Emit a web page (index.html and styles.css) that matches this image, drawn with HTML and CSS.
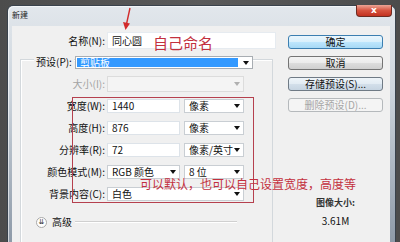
FILE: index.html
```html
<!DOCTYPE html>
<html lang="zh-CN">
<head>
  <meta charset="UTF-8" />
  <meta name="viewport" content="width=device-width, initial-scale=1.0" />
  <title>新建</title>
  <link rel="stylesheet" href="styles.css">
</head>
<body>
  <div class="desktop">
    <div class="window">
      <div class="titlebar">
        <span class="title">新建</span>
        <div class="close-btn">x</div>
      </div>
      <div class="client">
        <div class="main">
          <div class="row name-row">
            <span class="lbl">名称(N):</span>
            <div class="field name-field">同心圆</div>
          </div>

          <div class="group">
            <div class="preset-row">
              <span class="legend">预设(P):</span>
              <div class="combo preset-combo">
                <span class="selected">剪贴板</span>
                <span class="arrow"></span>
              </div>
            </div>
            <div class="row">
              <span class="lbl disabled">大小(I):</span>
              <div class="combo size-combo disabled"><span class="arrow"></span></div>
            </div>
            <div class="row">
              <span class="lbl">宽度(W):</span>
              <div class="field num-field">1440</div>
              <div class="combo unit-combo">像素<span class="arrow"></span></div>
            </div>
            <div class="row">
              <span class="lbl">高度(H):</span>
              <div class="field num-field">876</div>
              <div class="combo unit-combo">像素<span class="arrow"></span></div>
            </div>
            <div class="row">
              <span class="lbl">分辨率(R):</span>
              <div class="field num-field">72</div>
              <div class="combo unit-combo">像素/英寸<span class="arrow"></span></div>
            </div>
            <div class="row">
              <span class="lbl">颜色模式(M):</span>
              <div class="combo num-field">RGB 颜色<span class="arrow"></span></div>
              <div class="combo unit-combo">8 位<span class="arrow"></span></div>
            </div>
            <div class="row">
              <span class="lbl">背景内容(C):</span>
              <div class="combo wide-combo">白色<span class="arrow"></span></div>
            </div>
            <div class="advanced">
              <span class="expand">&#8650;</span>
              <span class="adv-label">高级</span>
              <span class="adv-line"></span>
            </div>
          </div>
        </div>

        <div class="side">
          <div class="btn default">确定</div>
          <div class="btn">取消</div>
          <div class="btn soft">存储预设(S)...</div>
          <div class="btn off">删除预设(D)...</div>
          <div class="info-title">图像大小:</div>
          <div class="info-value">3.61M</div>
        </div>
      </div>
    </div>

    <!-- red annotations drawn over the dialog -->
    <svg class="note-arrow" width="14" height="24" viewBox="0 0 14 24">
      <line x1="10" y1="1" x2="6.5" y2="17" stroke="#d22a2a" stroke-width="1.4" />
      <polygon points="3,15 10,16.5 5.5,23" fill="#d22a2a" />
    </svg>
    <div class="note note-name">自己命名</div>
    <div class="note-box"></div>
    <div class="note note-size">可以默认，也可以自己设置宽度，高度等</div>
  </div>
</body>
</html>
```

FILE: styles.css
```css
* {
  box-sizing: border-box;
}
body {
  margin: 0;
  width: 400px;
  height: 242px;
  overflow: hidden;
  background: #545454;
  font-family: "Noto Sans CJK SC", "Liberation Sans", sans-serif;
  font-size: 10px;
  color: #111;
}
.desktop {
  position: relative;
  width: 400px;
  height: 242px;
  overflow: hidden;
  padding: 5px 0 0 7px;
  background: linear-gradient(90deg, #4c4c4c, #5a5a5a 50%, #4c4c4c);
}
.window {
  display: flex;
  flex-direction: column;
  width: 389px;
  height: 237px;
  padding: 0 5px 0 4px;
  border: 1px solid #39424c;
  border-bottom: none;
  border-radius: 6px 6px 0 0;
  background: linear-gradient(#e2e7ec, #cdd5dd 35%, #8e9aa8);
  box-shadow: inset 1px 1px 0 rgba(255, 255, 255, 0.6);
}
.titlebar {
  height: 20px;
  display: flex;
  justify-content: space-between;
  align-items: flex-start;
}
.title {
  margin-top: 4px;
  font-size: 8px;
  line-height: 10px;
  color: #1c1c1c;
}
.close-btn {
  width: 36px;
  height: 12px;
  margin: -1px -2px 0 0;
  border: 1px solid #6d2b22;
  border-top: none;
  border-radius: 0 0 4px 4px;
  background: linear-gradient(#eaa596, #d6533f 50%, #c2311f);
  color: #fff;
  font-family: "DejaVu Sans", sans-serif;
  font-weight: bold;
  font-size: 9px;
  line-height: 10px;
  text-align: center;
}
.client {
  display: flex;
  flex: 1;
  background: #f0f0f0;
}
.main {
  width: 268px;
  padding-top: 4px;
}
.row {
  display: flex;
  align-items: center;
  height: 22px;
}
.name-row {
  height: 21px;
}
.lbl {
  width: 84px;
  margin-right: 2px;
  text-align: right;
  white-space: nowrap;
  line-height: 12px;
}
.name-row .lbl {
  width: 93px;
}
.disabled {
  color: #a3a3a3;
}
.field,
.combo {
  position: relative;
  height: 14px;
  padding-left: 4px;
  background: #fff;
  border: 1px solid #dde3e9;
  line-height: 12px;
  white-space: nowrap;
}
.combo {
  border-color: #c9ced3;
}
.name-field {
  width: 169px;
  height: 17px;
  line-height: 15px;
  border-color: #e6ebf0;
}
.num-field {
  width: 73px;
}
.unit-combo {
  width: 60px;
  margin-left: 4px;
}
.wide-combo {
  width: 137px;
}
.arrow {
  position: absolute;
  right: 3px;
  top: 4px;
  width: 0;
  height: 0;
  border-left: 3px solid transparent;
  border-right: 3px solid transparent;
  border-top: 4px solid #111;
}
.group {
  width: 253px;
  height: 183px;
  margin: 8px 0 0 8px;
  border: 1px solid #d3d8dc;
  border-bottom: none;
  box-shadow: inset 1px 1px 0 #fff;
}
.preset-row {
  display: flex;
  align-items: center;
  height: 22px;
  margin-top: -9px;
}
.legend {
  width: 40px;
  margin-left: 13px;
  padding-left: 2px;
  background: #f0f0f0;
  line-height: 12px;
  white-space: nowrap;
}
.preset-combo {
  width: 178px;
  height: 13px;
  margin-left: 1px;
  padding: 1px;
  border-color: #a8adb2;
}
.selected {
  display: block;
  width: 161px;
  height: 9px;
  padding-left: 3px;
  background: #3399ff;
  color: #fff;
  line-height: 9px;
}
.preset-combo .arrow {
  top: 4px;
  right: 3px;
}
.size-combo {
  width: 137px;
  height: 16px;
  background: #f4f4f4;
  border-color: #dcdcdc;
}
.size-combo .arrow {
  top: 5px;
  border-top-color: #b0b0b0;
}
.advanced {
  display: flex;
  align-items: center;
  height: 22px;
  margin-top: 6px;
}
.expand {
  width: 11px;
  height: 11px;
  margin-left: 15px;
  border: 1px solid #a9a9a9;
  border-radius: 50%;
  background: #fff;
  font-family: "DejaVu Sans", sans-serif;
  font-size: 7px;
  line-height: 9px;
  text-align: center;
  color: #333;
}
.adv-label {
  margin-left: 5px;
  line-height: 12px;
}
.adv-line {
  width: 162px;
  height: 2px;
  margin-left: 3px;
  border-top: 1px solid #d0d0d0;
  border-bottom: 1px solid #fff;
}
.side {
  width: 95px;
  margin-left: 8px;
  padding-top: 9px;
}
.btn {
  height: 14px;
  margin-bottom: 7px;
  border: 1px solid #747474;
  border-radius: 3px;
  background: linear-gradient(#f3f3f3, #ebebeb 50%, #dddddd 51%, #cfcfcf);
  line-height: 12px;
  text-align: center;
  white-space: nowrap;
}
.btn.default {
  border-color: #3c7fb1;
  background: linear-gradient(#eaf6fd, #d9f0fc 50%, #bee6fd 51%, #a7d9f5);
}
.btn.soft {
  border-color: #6f7a85;
  background: linear-gradient(#eef4f9, #e2ebf3 50%, #d3dfea 51%, #c6d4e1);
}
.btn.off {
  border-color: #b5b9bc;
  background: #f4f4f4;
  color: #a6a6a6;
}
.info-title {
  margin-top: 85px;
  font-size: 9px;
  font-weight: bold;
  line-height: 12px;
  text-align: center;
  color: #333;
}
.info-value {
  margin-top: 6px;
  font-size: 10px;
  line-height: 12px;
  text-align: center;
}
.note-arrow {
  position: absolute;
  left: 120px;
  top: 7px;
}
.note {
  position: absolute;
  color: #c3303e;
  white-space: nowrap;
}
.note-name {
  left: 153px;
  top: 34px;
  font-size: 15px;
  line-height: 18px;
}
.note-size {
  left: 140px;
  top: 176px;
  font-size: 12px;
  line-height: 16px;
}
.note-box {
  position: absolute;
  left: 72px;
  top: 97px;
  width: 182px;
  height: 106px;
  border: 1px solid #b5404e;
}
```
